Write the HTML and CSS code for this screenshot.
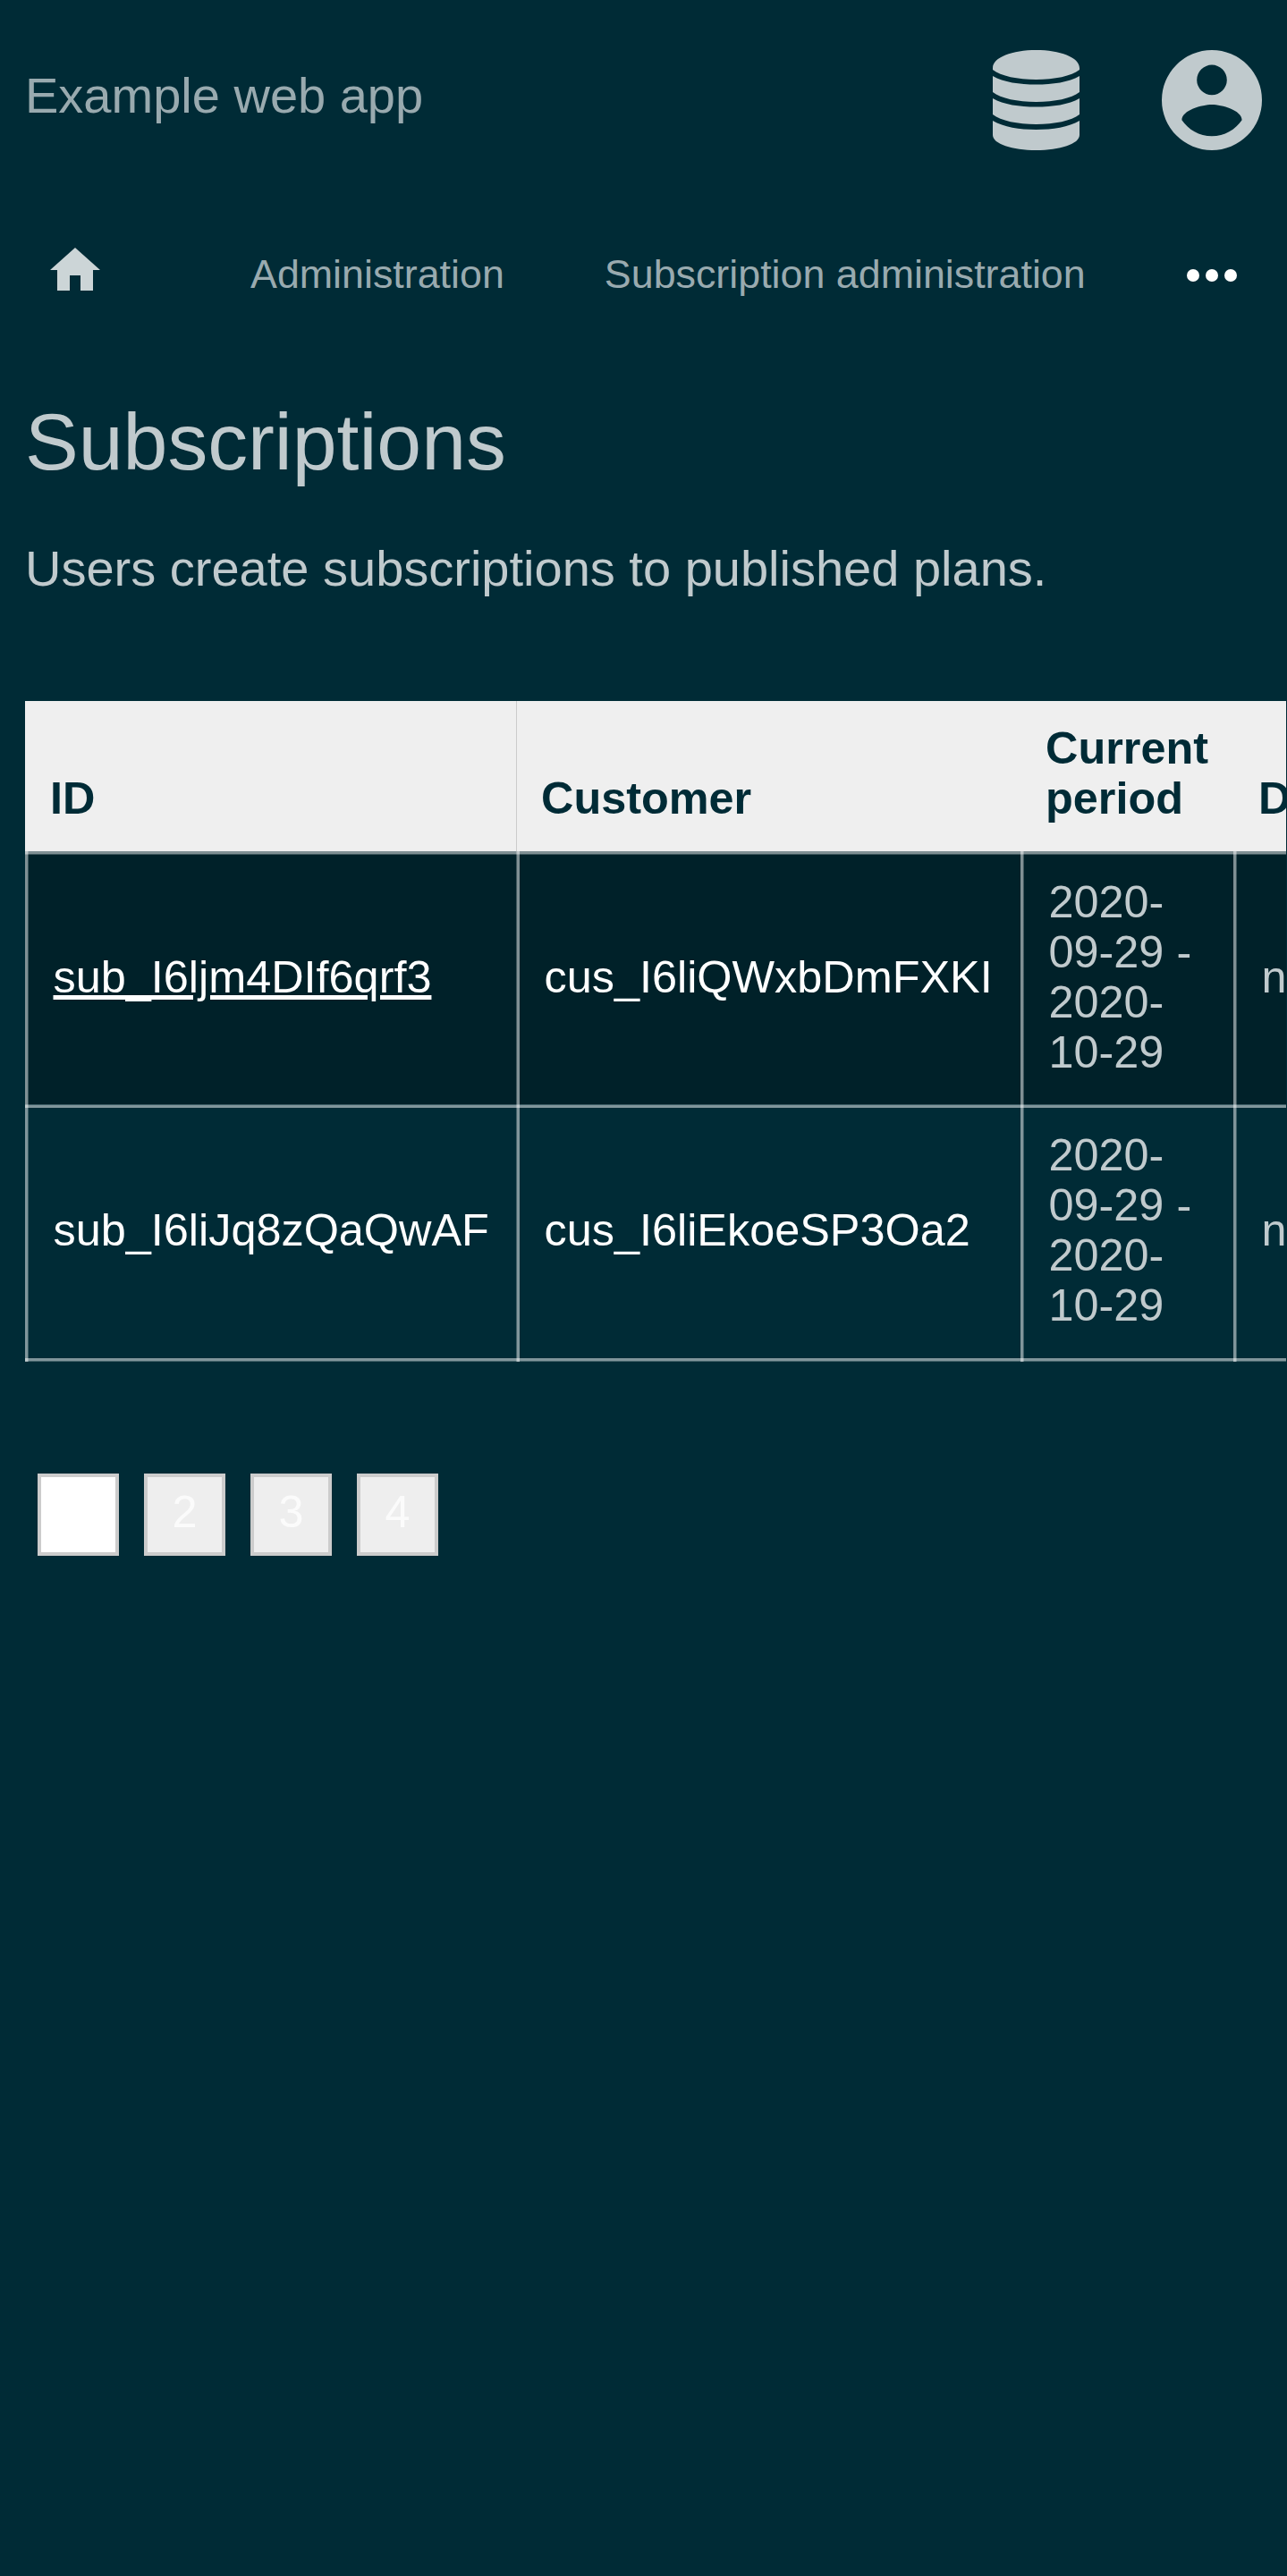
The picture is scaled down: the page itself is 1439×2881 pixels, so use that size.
FILE: index.html
```html
<!DOCTYPE html>
<html lang="en">
<head>
<meta charset="utf-8">
<title>Subscriptions</title>
<link rel="stylesheet" href="styles.css">
</head>
<body>
<header class="header">
  <a class="brand">Example web app</a>
  <div class="menus">
    <svg class="icon-db" viewBox="0 0 97 112"><path d="M0 20C0 8 22 0 48.500 0S97 8 97 20v2C88 29 69 33 48.500 33S9 29 0 22zM0 29c12 7 30 9.500 48.500 9.500S85 36 97 29v18c-9 7-28 11-48.500 11S9 54 0 47zM0 54c12 7 30 9.500 48.500 9.500S85 61 97 54v18c-9 7-28 11-48.500 11S9 79 0 72zM0 79c12 7 30 10 48.500 10S85 86 97 79v16c0 10-22 17-48.500 17S0 105 0 95z"/></svg>
    <svg class="icon-user" viewBox="0 0 112 112"><path fill-rule="evenodd" d="M56 0a56 56 0 1 0 0 112A56 56 0 1 0 56 0zM56 16.600a16.800 16.800 0 1 1 0 33.600a16.800 16.800 0 1 1 0-33.600zM56 96.300c-14 0-26.400-7.200-33.600-18C22.600 67.200 44.800 61 56 61s33.400 6.200 33.600 17.300c-7.200 10.800-19.600 18-33.600 18z"/></svg>
  </div>
</header>
<nav class="nav">
  <svg class="icon-home" viewBox="0 0 56 48"><path d="M22 48V31h12v17h14V25h8L28 0 0 25h8v23z"/></svg>
  <a class="crumb">Administration</a>
  <a class="crumb">Subscription administration</a>
  <svg class="icon-more" viewBox="0 0 56 14"><circle cx="7" cy="7" r="7"/><circle cx="28" cy="7" r="7"/><circle cx="49" cy="7" r="7"/></svg>
</nav>
<main class="content">
  <h1 class="title">Subscriptions</h1>
  <p class="intro">Users create subscriptions to published plans.</p>
  <div class="table-wrap">
    <table class="table">
      <colgroup><col class="col-id"><col class="col-customer"><col class="col-period"><col class="col-last"></colgroup>
      <thead><tr><th>ID</th><th class="divided">Customer</th><th>Current period</th><th>Discount</th></tr></thead>
      <tbody>
        <tr><td><a class="link underlined">sub_I6ljm4DIf6qrf3</a></td><td><a class="link">cus_I6liQWxbDmFXKI</a></td><td>2020-09-29 - 2020-10-29</td><td>none</td></tr>
        <tr><td><a class="link">sub_I6liJq8zQaQwAF</a></td><td><a class="link">cus_I6liEkoeSP3Oa2</a></td><td>2020-09-29 - 2020-10-29</td><td>none</td></tr>
      </tbody>
    </table>
  </div>
  <ul class="pages"><li class="page current">1</li><li class="page">2</li><li class="page">3</li><li class="page">4</li></ul>
</main>
</body>
</html>
```

FILE: styles.css
```css
* { box-sizing: border-box; }
body { margin: 0; min-height: 2881px; overflow: hidden; background: #002b36; color: #c0cacd; font: 56px/64px "Liberation Sans", Arial, sans-serif; }
svg { display: block; flex: none; }
.header { display: flex; justify-content: space-between; align-items: flex-start; height: 224px; padding: 56px 28px 0 28px; }
.brand { padding-top: 19px; color: #99aaaf; }
.menus { display: flex; gap: 92px; fill: #c0cacd; }
.icon-db { width: 97px; height: 112px; }
.icon-user { width: 112px; height: 112px; }
.nav { display: flex; align-items: center; height: 168px; padding: 0 56px; font-size: 44.8px; line-height: 52px; }
.icon-home { width: 56px; height: 48px; margin: -15px 168px 0 0; fill: #ccd5d7; }
.crumb { margin-right: 112px; padding-bottom: 5px; color: #99aaaf; white-space: nowrap; }
.icon-more { width: 56px; height: 14px; margin-left: 1px; fill: #fff; }
.content { padding-left: 28px; }
.title { margin: 0; padding-top: 52px; font-size: 89.6px; font-weight: 400; line-height: 100px; }
.intro { margin: 0; padding: 60px 0 0; }
.table-wrap { width: 1410px; margin-top: 116px; overflow: hidden; }
.table { width: 1810px; table-layout: fixed; border-spacing: 0; font-size: 50.4px; line-height: 56px; }
.col-id { width: 549px; }
.col-customer { width: 564px; }
.col-period { width: 238px; }
th { height: 168px; padding: 25px 28px 31px; background: #efefef; color: #002b36; text-align: left; vertical-align: bottom; }
.divided { border-left: 1px solid #cbcbcb; padding-left: 27px; }

/* Translucent grid lines, 3.5px thick: three full pixels and one half-strength */
td {
  --v: linear-gradient(90deg, rgba(255,255,255,.5) 3px, rgba(255,255,255,.25) 3px) 0 0 / 4px 100% no-repeat;
  --h: linear-gradient(rgba(255,255,255,.5) 3px, rgba(255,255,255,.25) 3px) 0 0 / 100% 4px no-repeat;
  height: 283px; padding: 29px 24px 30px 31.500px; vertical-align: middle;
  background: var(--v), var(--h);
}
td:nth-child(2) { --v: linear-gradient(90deg, rgba(255,255,255,.25) 1px, rgba(255,255,255,.5) 1px) 0 0 / 4px 100% no-repeat; }
tbody tr:first-child { background: #002129; }
tbody tr:last-child td {
  --h: linear-gradient(rgba(255,255,255,.25) 1px, rgba(255,255,255,.5) 1px) 0 0 / 100% 4px no-repeat;
  height: 288px; padding-bottom: 35px;
  background: var(--v), var(--h), linear-gradient(rgba(255,255,255,.5) 3px, rgba(255,255,255,.25) 3px) 0 100% / 100% 4px no-repeat;
}
.link { color: #fff; }
.underlined { text-decoration: underline; }
.pages { display: flex; gap: 28px; margin: 125px 0 0 14px; padding: 0; list-style: none; font-size: 50.4px; line-height: 56px; }
.page { width: 91px; height: 92px; padding-top: 11px; border: 4px solid #ccc; background: #eee; color: #fbfbfb; text-align: center; }
.current { background: #fff; color: #fff; }
```
